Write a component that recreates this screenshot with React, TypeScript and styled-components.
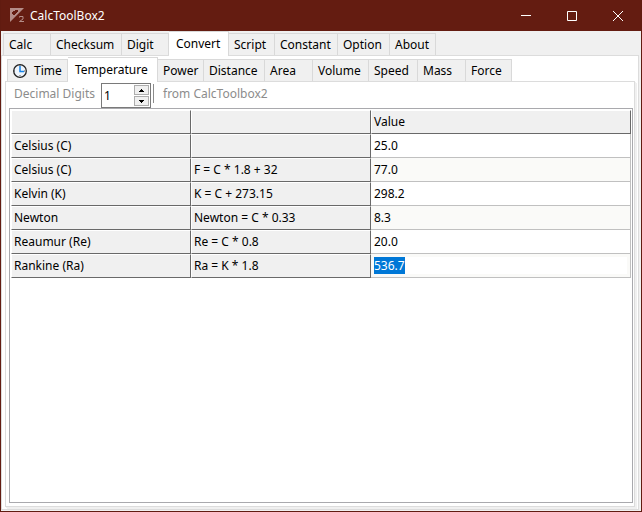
import React, { useEffect, useRef, useState } from 'react';
import styled, { createGlobalStyle } from 'styled-components';

const GlobalStyle = createGlobalStyle`
  * { box-sizing: border-box; }
  html, body { margin: 0; padding: 0; }
  body, button, input {
    font-family: "Noto Sans", "Open Sans", sans-serif;
    font-size: 12px;
    line-height: 16px;
    color: #000;
  }
`;

const Window = styled.div`
  display: flex;
  flex-direction: column;
  min-height: 100vh;
  background: #f0f0f0;
  border: 1px solid #611b10;
  border-top: 0;
`;

const TitleBar = styled.header`
  display: flex;
  align-items: center;
  height: 31px;
  padding-left: 8px;
  background: #641c11;
  color: #fff;
`;

const Title = styled.h1`
  flex: 1;
  margin: 0 0 0 5px;
  font-size: 12px;
  font-weight: 400;
`;

const WindowButton = styled.button`
  display: flex;
  align-items: center;
  justify-content: center;
  width: 46px;
  height: 31px;
  padding: 0;
  border: 0;
  background: none;
`;

const Strip = styled.div<{ $inset: number }>`
  display: flex;
  align-items: flex-end;
  height: 24px;
  padding-left: ${(p) => p.$inset}px;
`;

const TabButton = styled.button<{ $width: number; $active: boolean; $first: boolean }>`
  display: flex;
  align-items: center;
  gap: 7px;
  width: ${(p) => p.$width}px;
  height: ${(p) => (p.$active ? 25 : 22)}px;
  padding: 0 0 0 ${(p) => (p.$active ? 7 : 5)}px;
  margin-bottom: ${(p) => (p.$active ? -1 : 0)}px;
  z-index: ${(p) => (p.$active ? 1 : 0)};
  border: solid #d9d9d9;
  border-width: 1px 1px 0 ${(p) => (p.$first ? 1 : 0)}px;
  background: ${(p) => (p.$active ? '#fff' : '#f0f0f0')};
  white-space: nowrap;
`;

const OuterPane = styled.div`
  display: flex;
  flex: 1;
  flex-direction: column;
  margin: 0 2px 1px 0;
  padding: 1px 3px 2px;
  border: 1px solid #dcdcdc;
  background: #fff;
`;

const InnerPane = styled.div`
  display: flex;
  flex: 1;
  flex-direction: column;
  padding: 0 1px 3px 3px;
  border: 1px solid #dcdcdc;
  box-shadow: 1px 1px 0 #f0f0f0, 2px 2px 0 #f0f0f0;
`;

const Toolbar = styled.div`
  display: flex;
  align-items: flex-start;
  height: 26px;
  padding: 1px 0 0 5px;
  color: #8c8c8c;
`;

const ToolLabel = styled.label`
  width: 87px;
  padding-top: 3px;
  white-space: nowrap;
`;

const ToolText = styled.span`
  padding-top: 3px;
`;

const Separator = styled.span`
  width: 1px;
  height: 19px;
  margin: 1px 9px 0 2px;
  background: #8c8c8c;
`;

const SpinBox = styled.div`
  display: flex;
  width: 50px;
  height: 25px;
  padding: 1px;
  border: 1px solid #7a7a7a;
  background: #fff;
`;

const SpinInput = styled.input`
  flex: 1;
  min-width: 0;
  padding: 0 0 0 1px;
  border: 0;
  outline: 0;
  background: none;
`;

const SpinButtons = styled.div`
  display: flex;
  flex-direction: column;
  gap: 1px;
  width: 15px;
`;

const SpinButton = styled.button`
  display: flex;
  flex: 1;
  align-items: center;
  justify-content: center;
  min-height: 0;
  padding: 0;
  border: 1px solid #adadad;
  background: #f0f0f0;
`;

const GridFrame = styled.main`
  flex: 1;
  padding: 1px;
  border: 1px solid #a9a9ad;
  background: #fff;
`;

const Table = styled.table`
  width: 100%;
  table-layout: fixed;
  border-collapse: separate;
  border-spacing: 0;
`;

const FixedCol = styled.col`
  width: 180px;
`;

const HeadCell = styled.th`
  height: 24px;
  padding: 0 0 0 2px;
  border: 1px solid #fff;
  border-right-color: #696969;
  border-bottom-color: #696969;
  background: #f0f0f0;
  font-weight: 400;
  text-align: left;
  white-space: nowrap;
`;

const ValueCell = styled.td<{ $shaded: boolean }>`
  height: 24px;
  padding: 0 3px;
  border: solid #c0c0c0;
  border-width: 0 1px 1px 0;
  background: ${(p) => (p.$shaded ? '#fafaf8' : '#fff')};
`;

const ValueInput = styled.input`
  display: block;
  width: 100%;
  height: 17px;
  padding: 0;
  border: 0;
  outline: 0;
  background: #fff;
  &::selection {
    background: #0078d7;
    color: #fff;
  }
`;

const mainTabs: [string, number][] = [
  ['Calc', 48], ['Checksum', 71], ['Digit', 47], ['Convert', 60],
  ['Script', 46], ['Constant', 63], ['Option', 52], ['About', 46],
];

const unitTabs: [string, number][] = [
  ['Time', 61], ['Temperature', 90], ['Power', 46], ['Distance', 61], ['Area', 48],
  ['Volume', 56], ['Speed', 49], ['Mass', 48], ['Force', 46],
];

const rows: [string, string, string][] = [
  ['Celsius (C)', '', '25.0'],
  ['Celsius (C)', 'F = C * 1.8 + 32', '77.0'],
  ['Kelvin (K)', 'K = C + 273.15', '298.2'],
  ['Newton', 'Newton = C * 0.33', '8.3'],
  ['Reaumur (Re)', 'Re = C * 0.8', '20.0'],
  ['Rankine (Ra)', 'Ra = K * 1.8', '536.7'],
];

function AppIcon() {
  return (
    <svg width="16" height="16" viewBox="0 0 16 16" aria-hidden="true">
      <path fillRule="evenodd" fill="#b48d88" d="M1 0h14L1 14zM3 4v2h1v1h2V6h1V5h1V4h1V2H6v1H4v1z" />
      <path fill="none" stroke="#b48d88" d="M10.500 9.500V8.500h3.500v2.500l-3.500 2.500h4.500" />
    </svg>
  );
}

function ClockIcon() {
  return (
    <svg width="14" height="14" viewBox="0 0 14 14" aria-hidden="true">
      <circle cx="7" cy="7" r="6.300" fill="#eef4fb" stroke="#222" strokeWidth="1.300" />
      <path stroke="#555" strokeDasharray="1 1" d="M7 1v2M7 11v2M1 7h2M11 7h2" />
      <path fill="none" stroke="#1683e8" strokeWidth="1.500" d="M7 2v5.500h4" />
    </svg>
  );
}

function Arrow({ up = false }: { up?: boolean }) {
  return (
    <svg width="5" height="3" viewBox="0 0 5 3" shapeRendering="crispEdges" aria-hidden="true">
      <path d={up ? 'M0 3h5V2H4V1H3V0H2v1H1v1H0z' : 'M0 0h5v1H4v1H3v1H2V2H1V1H0z'} />
    </svg>
  );
}

interface TabsProps {
  label: string;
  tabs: [string, number][];
  inset: number;
  initial: string;
}

function Tabs({ label, tabs, inset, initial }: TabsProps) {
  const [active, setActive] = useState(initial);
  return (
    <Strip $inset={inset} role="tablist" aria-label={label}>
      {tabs.map(([name, width], i) => (
        <TabButton
          key={name}
          type="button"
          role="tab"
          aria-selected={name === active}
          $width={width}
          $active={name === active}
          $first={i === 0}
          onClick={() => setActive(name)}
        >
          {name === 'Time' && <ClockIcon />}
          {name}
        </TabButton>
      ))}
    </Strip>
  );
}

export default function App() {
  const [digits, setDigits] = useState(1);
  const [values, setValues] = useState(rows.map((row) => row[2]));
  const lastInput = useRef<HTMLInputElement>(null);

  useEffect(() => {
    lastInput.current?.focus();
    lastInput.current?.select();
  }, []);

  return (
    <>
      <GlobalStyle />
      <Window>
        <TitleBar>
          <AppIcon />
          <Title>CalcToolBox2</Title>
          <WindowButton type="button" aria-label="Minimize">
            <svg width="10" height="10" viewBox="0 0 10 10"><path stroke="#fff" d="M0 4.500h10" /></svg>
          </WindowButton>
          <WindowButton type="button" aria-label="Maximize">
            <svg width="10" height="10" viewBox="0 0 10 10"><path fill="none" stroke="#fff" d="M.5.5h9v9h-9z" /></svg>
          </WindowButton>
          <WindowButton type="button" aria-label="Close">
            <svg width="10" height="10" viewBox="0 0 10 10"><path stroke="#fff" d="M0 0l10 10M10 0L0 10" /></svg>
          </WindowButton>
        </TitleBar>
        <Tabs label="Tools" tabs={mainTabs} inset={2} initial="Convert" />
        <OuterPane>
          <Tabs label="Units" tabs={unitTabs} inset={2} initial="Temperature" />
          <InnerPane>
            <Toolbar>
              <ToolLabel htmlFor="digits">Decimal Digits</ToolLabel>
              <SpinBox>
                <SpinInput
                  id="digits"
                  inputMode="numeric"
                  value={digits}
                  onChange={(e) => setDigits(Number(e.target.value) || 0)}
                />
                <SpinButtons>
                  <SpinButton type="button" aria-label="More digits" onClick={() => setDigits(digits + 1)}>
                    <Arrow up />
                  </SpinButton>
                  <SpinButton type="button" aria-label="Fewer digits" onClick={() => setDigits(Math.max(0, digits - 1))}>
                    <Arrow />
                  </SpinButton>
                </SpinButtons>
              </SpinBox>
              <Separator />
              <ToolText>from CalcToolbox2</ToolText>
            </Toolbar>
            <GridFrame>
              <Table>
                <colgroup>
                  <FixedCol />
                  <FixedCol />
                  <col />
                </colgroup>
                <thead>
                  <tr>
                    <HeadCell scope="col" aria-label="Unit" />
                    <HeadCell scope="col" aria-label="Formula" />
                    <HeadCell scope="col">Value</HeadCell>
                  </tr>
                </thead>
                <tbody>
                  {rows.map(([unit, formula], i) => (
                    <tr key={i}>
                      <HeadCell scope="row">{unit}</HeadCell>
                      <HeadCell as="td">{formula}</HeadCell>
                      <ValueCell $shaded={i % 2 === 1}>
                        {i === rows.length - 1 ? (
                          <ValueInput
                            ref={lastInput}
                            aria-label={unit}
                            value={values[i]}
                            onChange={(e) => setValues(values.map((v, n) => (n === i ? e.target.value : v)))}
                          />
                        ) : (
                          values[i]
                        )}
                      </ValueCell>
                    </tr>
                  ))}
                </tbody>
              </Table>
            </GridFrame>
          </InnerPane>
        </OuterPane>
      </Window>
    </>
  );
}
